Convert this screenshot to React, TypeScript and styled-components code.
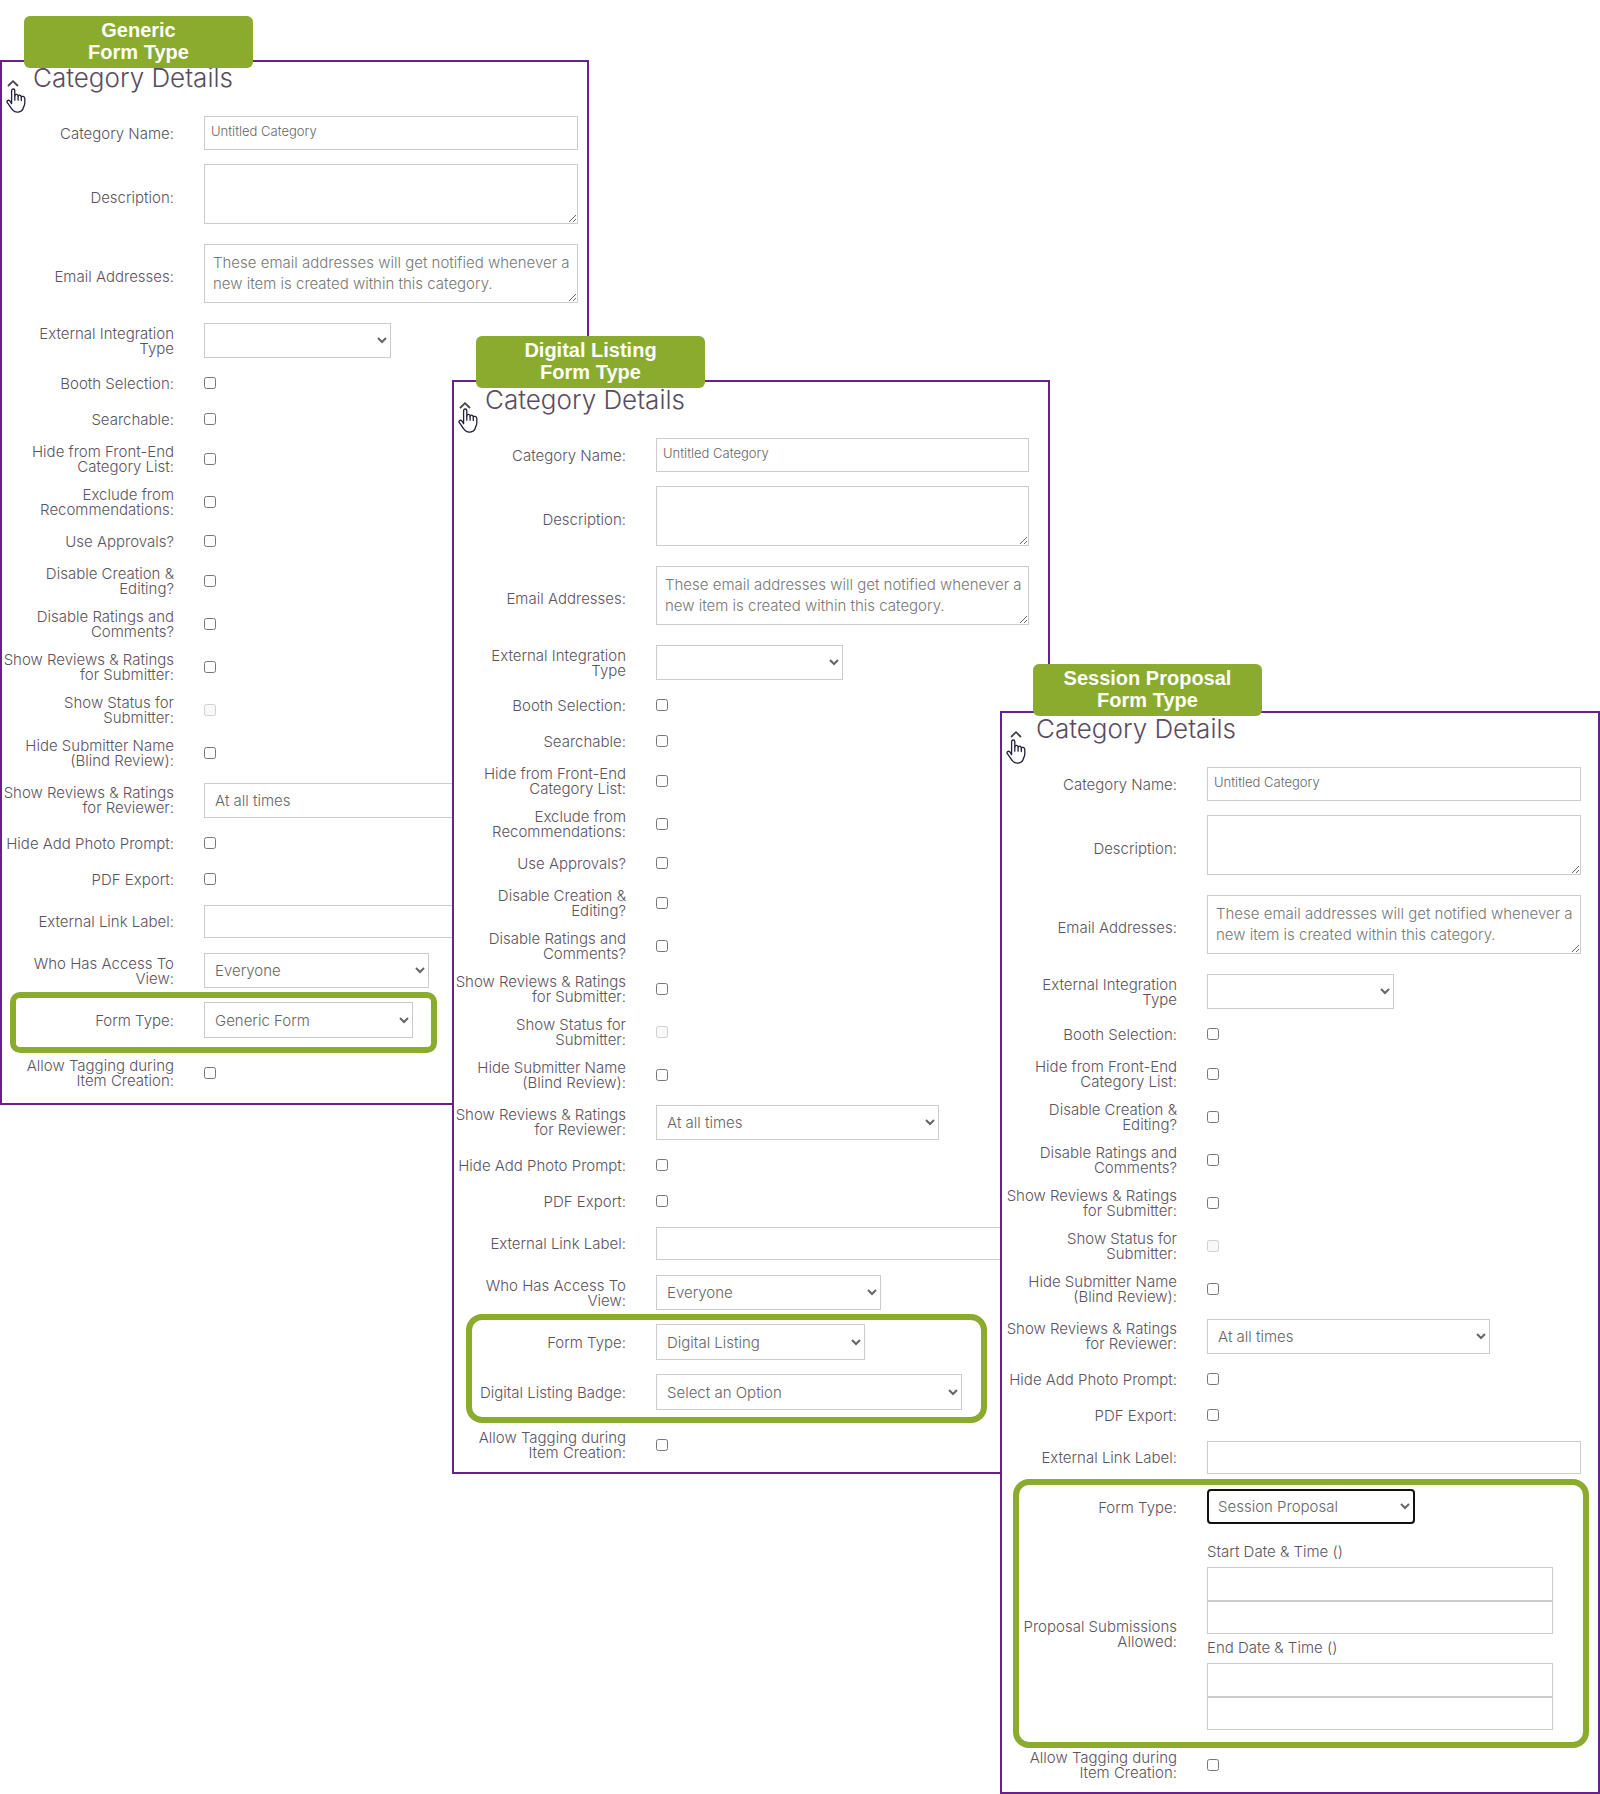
import React, { useId } from "react";
import styled, { createGlobalStyle } from "styled-components";

const GlobalStyle = createGlobalStyle`
  *, *::before, *::after { box-sizing: border-box; }
  body {
    margin: 0;
    background: #fff;
    font-family: Inter, "Open Sans", "Liberation Sans", sans-serif;
    font-weight: 300;
    color: #5c5360;
  }
`;

const purple = "#66218f";
const green = "#8aab2e";

const Canvas = styled.main`
  display: grid;
  grid-template-columns:
    minmax(0, 452fr) minmax(0, 137fr) minmax(0, 411fr)
    minmax(0, 50fr) minmax(0, 550fr);
  align-items: start;
`;

const Panel = styled.section<{ $columns: string; $drop: number; $end: number }>`
  position: relative;
  grid-row: 1;
  grid-column: ${(p) => p.$columns};
  margin-top: ${(p) => p.$drop}px;
  padding-bottom: ${(p) => p.$end}px;
  background: #fff;
  border: 2px solid ${purple};
`;

const Badge = styled.div<{ $left: number; $top: number }>`
  position: absolute;
  z-index: 1;
  left: ${(p) => p.$left}px;
  top: ${(p) => p.$top}px;
  width: 229px;
  padding: 3px 0 5px;
  border-radius: 6px;
  background: ${green};
  color: #fff;
  font: bold 20px/22px "Liberation Sans", Arial, sans-serif;
  text-align: center;
  white-space: pre-line;
`;

const Body = styled.form<{ $inset: number; $lead: number; $right: number }>`
  padding: ${(p) => p.$lead}px ${(p) => p.$right}px 0 ${(p) => p.$inset}px;
`;

const Header = styled.header`
  display: flex;
  align-items: flex-start;
  height: 47px;
`;

const Collapse = styled.button`
  display: flex;
  width: 31px;
  padding: 18px 0 0 5px;
  border: 0;
  background: none;
  color: #4a4150;
`;

const Title = styled.h2`
  margin: 0;
  font-size: 26px;
  line-height: 32px;
  font-weight: 300;
  color: #5a4c60;
`;

const Pointer = styled.svg`
  position: absolute;
  left: 4px;
  top: 26px;
`;

const Row = styled.div<{ $height: number }>`
  display: grid;
  grid-template-columns: 172px minmax(0, 1fr);
  column-gap: 30px;
  min-height: ${(p) => p.$height}px;
`;

const Label = styled.label`
  align-self: center;
  font-size: 15px;
  line-height: 15px;
  text-align: right;
  white-space: pre;
  justify-self: end;
`;

const Control = styled.div<{ $top?: number }>`
  display: flex;
  flex-direction: column;
  align-items: flex-start;
  justify-content: ${(p) => (p.$top === undefined ? "center" : "flex-start")};
  padding-top: ${(p) => p.$top ?? 0}px;
`;

const TextInput = styled.input<{ $height: number }>`
  width: 100%;
  height: ${(p) => p.$height}px;
  padding: 0 6px 4px;
  border: 1px solid #ccc;
  background: #fff;
  color: #666;
  font: inherit;
  font-size: 13px;
`;

const TextArea = styled.textarea<{ $height: number }>`
  display: block;
  width: 100%;
  height: ${(p) => p.$height}px;
  padding: 7px 4px 7px 8px;
  border: 1px solid #ccc;
  background: #fff;
  color: #666;
  font: inherit;
  font-size: 15px;
  line-height: 21px;
  overflow: hidden;
  &::placeholder { color: #777; }
`;

const Select = styled.select<{ $width: number; $height: number; $active?: boolean }>`
  width: ${(p) => p.$width}px;
  max-width: 100%;
  height: ${(p) => p.$height}px;
  padding: 0 0 0 ${(p) => (p.$active ? 5 : 6)}px;
  border: ${(p) => (p.$active ? "2px solid #111" : "1px solid #ccc")};
  border-radius: ${(p) => (p.$active ? 4 : 0)}px;
  background: #fff;
  color: #666;
  font: inherit;
  font-size: 15px;
`;

const Check = styled.input`
  width: 12px;
  height: 12px;
  margin: 0;
`;

const Highlight = styled.div<{ $left: number; $right: number; $foot: number; $radius: number }>`
  position: relative;
  margin-bottom: 6px;
  &::after {
    content: "";
    position: absolute;
    top: -3px;
    bottom: ${(p) => -p.$foot}px;
    left: ${(p) => p.$left}px;
    right: ${(p) => p.$right}px;
    border: 6px solid ${green};
    border-radius: ${(p) => p.$radius}px;
    pointer-events: none;
  }
`;

const Period = styled.fieldset`
  width: 346px;
  max-width: 100%;
  margin: 0;
  padding: 0;
  border: 0;
  display: grid;
  grid-template-rows: 29px 34px 33px;
`;

const PeriodName = styled.label`
  align-self: center;
  padding-bottom: 2px;
  font-size: 15px;
  line-height: 20px;
`;

function TextField({ label, value }: { label: string; value?: string }) {
  const id = useId();
  const height = value ? 34 : 33;
  return (
    <Row $height={value ? 48 : 49}>
      <Label htmlFor={id}>{label}</Label>
      <Control>
        <TextInput id={id} type="text" $height={height} defaultValue={value} />
      </Control>
    </Row>
  );
}

function AreaField({ label, hint }: { label: string; hint?: string }) {
  const id = useId();
  return (
    <Row $height={hint ? 79 : 80}>
      <Label htmlFor={id}>{label}</Label>
      <Control $top={7}>
        <TextArea id={id} placeholder={hint} $height={hint ? 59 : 60} />
      </Control>
    </Row>
  );
}

function CheckField({ label, disabled }: { label: string; disabled?: boolean }) {
  const id = useId();
  return (
    <Row $height={label.includes("\n") ? 43 : 36}>
      <Label htmlFor={id}>{label}</Label>
      <Control>
        <Check id={id} type="checkbox" disabled={disabled} />
      </Control>
    </Row>
  );
}

type SelectProps = {
  label: string;
  value: string;
  width: number;
  row?: number;
  height?: number;
  top?: number;
  active?: boolean;
};

function SelectField({ label, value, width, row = 49, height = 35, top, active }: SelectProps) {
  const id = useId();
  return (
    <Row $height={row}>
      <Label htmlFor={id}>{label}</Label>
      <Control $top={top}>
        <Select id={id} $width={width} $height={height} $active={active} defaultValue={value}>
          <option value={value}>{value}</option>
        </Select>
      </Control>
    </Row>
  );
}

function FormType({ value, active }: { value: string; active?: boolean }) {
  return (
    <SelectField
      label="Form Type:"
      value={value}
      width={active ? 208 : 209}
      row={50}
      height={active ? 35 : 36}
      top={7}
      active={active}
    />
  );
}

function DatePeriod({ name }: { name: string }) {
  const id = useId();
  return (
    <Period>
      <PeriodName htmlFor={id}>{name}</PeriodName>
      <TextInput id={id} type="text" $height={34} />
      <TextInput type="text" aria-label={name} $height={33} />
    </Period>
  );
}

const ProposalRow = styled(Row)`
  padding: 6px 0 7px;
`;

function ProposalWindow() {
  return (
    <ProposalRow $height={205}>
      <Label as="span">{"Proposal Submissions\nAllowed:"}</Label>
      <Control>
        <DatePeriod name="Start Date & Time ()" />
        <DatePeriod name="End Date & Time ()" />
      </Control>
    </ProposalRow>
  );
}

function PanelHeader() {
  return (
    <Header>
      <Collapse type="button" aria-label="Collapse">
        <svg width="12" height="7" viewBox="0 0 12 7" fill="none" stroke="currentColor" strokeWidth="1.8">
          <path d="M1 6 L6 1.2 L11 6" />
        </svg>
      </Collapse>
      <Title>Category Details</Title>
      <Pointer width="20" height="25" viewBox="0 0 20 25" fill="#fff" stroke="#22203a" strokeWidth="1.3" strokeLinejoin="round" strokeLinecap="round">
        <path d="M5.6 15.6 V2.7 C5.6 .4 8.8 .4 8.8 2.7 V8 C9.2 5.8 12 6 12.1 8.2 C12.6 6.6 15.1 6.8 15.3 9 C16 7.9 18.6 8 18.8 10.6 V15 C18.8 17.5 17.4 18.6 17 21 C15.6 24.6 9.2 25 7 22.4 C4.6 20 3.4 17 1.4 14.8 C.2 13 2.4 11.2 3.9 13 Z" />
        <path d="M8.8 8 V12.2 M12.1 8.4 V12.2 M15.3 9.2 V12.6" />
      </Pointer>
    </Header>
  );
}

function BasicFields() {
  return (
    <>
      <TextField label="Category Name:" value="Untitled Category" />
      <AreaField label="Description:" />
      <AreaField
        label="Email Addresses:"
        hint="These email addresses will get notified whenever a new item is created within this category."
      />
      <SelectField label={"External Integration\nType"} value="" width={187} />
      <CheckField label="Booth Selection:" />
    </>
  );
}

function ReviewFields() {
  return (
    <>
      <CheckField label={"Disable Creation &\nEditing?"} />
      <CheckField label={"Disable Ratings and\nComments?"} />
      <CheckField label={"Show Reviews & Ratings\nfor Submitter:"} />
      <CheckField label={"Show Status for\nSubmitter:"} disabled />
      <CheckField label={"Hide Submitter Name\n(Blind Review):"} />
      <SelectField label={"Show Reviews & Ratings\nfor Reviewer:"} value="At all times" width={283} row={51} top={9} />
      <CheckField label="Hide Add Photo Prompt:" />
      <CheckField label="PDF Export:" />
      <TextField label="External Link Label:" />
    </>
  );
}

function ListingFields() {
  return (
    <>
      <BasicFields />
      <CheckField label="Searchable:" />
      <CheckField label={"Hide from Front-End\nCategory List:"} />
      <CheckField label={"Exclude from\nRecommendations:"} />
      <CheckField label="Use Approvals?" />
      <ReviewFields />
      <SelectField label={"Who Has Access To\nView:"} value="Everyone" width={225} />
    </>
  );
}

const Tagging = () => <CheckField label={"Allow Tagging during\nItem Creation:"} />;

export default function App() {
  return (
    <>
      <GlobalStyle />
      <Canvas>
        <Panel $columns="1 / 3" $drop={60} $end={9}>
          <Badge $left={22} $top={-46}>{"Generic\nForm Type"}</Badge>
          <Body $inset={0} $lead={0} $right={9}>
            <PanelHeader />
            <ListingFields />
            <Highlight $left={8} $right={141} $foot={8} $radius={10}>
              <FormType value="Generic Form" />
            </Highlight>
            <Tagging />
          </Body>
        </Panel>

        <Panel $columns="2 / 5" $drop={380} $end={6}>
          <Badge $left={22} $top={-46}>{"Digital Listing\nForm Type"}</Badge>
          <Body $inset={0} $lead={2} $right={19}>
            <PanelHeader />
            <ListingFields />
            <Highlight $left={12} $right={42} $foot={6} $radius={16}>
              <FormType value="Digital Listing" />
              <SelectField label="Digital Listing Badge:" value="Select an Option" width={306} row={50} height={36} />
            </Highlight>
            <Tagging />
          </Body>
        </Panel>

        <Panel $columns="4 / 6" $drop={711} $end={6}>
          <Badge $left={31} $top={-49}>{"Session Proposal\nForm Type"}</Badge>
          <Body $inset={3} $lead={0} $right={17}>
            <PanelHeader />
            <BasicFields />
            <CheckField label={"Hide from Front-End\nCategory List:"} />
            <ReviewFields />
            <Highlight $left={8} $right={-8} $foot={11} $radius={16}>
              <FormType value="Session Proposal" active />
              <ProposalWindow />
            </Highlight>
            <Tagging />
          </Body>
        </Panel>
      </Canvas>
    </>
  );
}
